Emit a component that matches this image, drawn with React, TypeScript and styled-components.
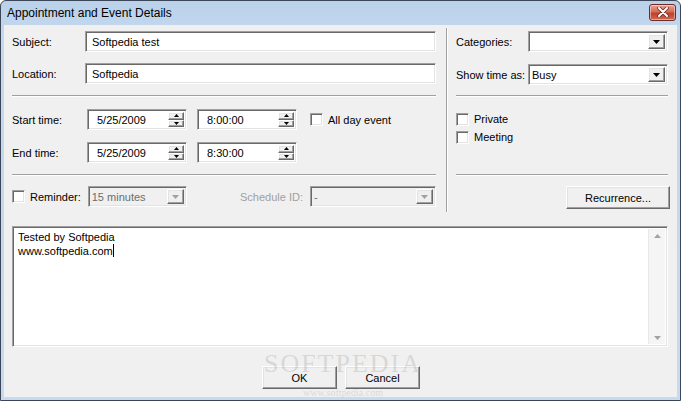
import React from 'react';
import styled, { createGlobalStyle, css } from 'styled-components';

const GlobalStyle = createGlobalStyle`
  html, body { margin: 0; padding: 0; background: #fff; }
  body {
    font-family: "Liberation Sans", Arial, sans-serif;
    font-size: 11px;
    color: #000;
  }
`;

const sunken = css`
  box-sizing: border-box;
  border: 1px solid;
  border-color: #a0a0a0 #fff #fff #a0a0a0;
  box-shadow: inset 1px 1px 0 #696969, inset -1px -1px 0 #e3e3e3;
`;

const raised = css`
  box-sizing: border-box;
  border: 1px solid;
  border-color: #fff #696969 #696969 #fff;
  box-shadow: inset -1px -1px 0 #a0a0a0, inset 1px 1px 0 #e3e3e3;
  background: #f0f0f0;
`;

const Window = styled.div`
  position: relative;
  width: 681px;
  height: 401px;
  box-sizing: border-box;
  display: flex;
  flex-direction: column;
  background: linear-gradient(#b9d1ea, #c4d8ee 30px, #c7daef);
  border: 1px solid #3c4657;
  border-radius: 6px 6px 0 0;
  padding: 0 3px 3px 3px;
  overflow: hidden;
`;

const TitleBar = styled.div`
  height: 24px;
  display: flex;
  align-items: center;
  justify-content: space-between;
  padding: 0 0 0 3px;
`;

const Title = styled.span`
  font-size: 12px;
  color: #000;
  margin-top: -1px;
`;

const CloseButton = styled.div`
  width: 27px;
  height: 17px;
  box-sizing: border-box;
  margin: -2px 1px 0 0;
  border: 1px solid #6b2b26;
  border-radius: 3px;
  background: linear-gradient(#e8a593, #d56b55 45%, #c0412a 55%, #cf6a4f);
  box-shadow: inset 0 0 0 1px rgba(255, 255, 255, 0.45);
  display: flex;
  align-items: center;
  justify-content: center;
`;

const Client = styled.div`
  flex: 1;
  background: #f0f0f0;
  padding: 0 7px 0 8px;
  display: flex;
  flex-direction: column;
`;

const TopArea = styled.div`
  height: 201px;
  display: flex;
`;

const Panel = styled.div<{ $width: number }>`
  width: ${(p) => p.$width}px;
  padding-top: 6px;
  display: flex;
  flex-direction: column;
`;

const VDivider = styled.div`
  width: 0;
  height: 184px;
  margin: 3px 8px 0 10px;
  border-left: 1px solid #a0a0a0;
  border-right: 1px solid #fff;
`;

const Row = styled.div<{ $top?: number; $height?: number; $end?: boolean }>`
  display: flex;
  align-items: center;
  justify-content: ${(p) => (p.$end ? 'flex-end' : 'flex-start')};
  height: ${(p) => p.$height ?? 21}px;
  margin-top: ${(p) => p.$top ?? 0}px;
`;

const Label = styled.span<{ $width?: number; $left?: number; $disabled?: boolean }>`
  width: ${(p) => (p.$width ? `${p.$width}px` : 'auto')};
  margin-left: ${(p) => p.$left ?? 0}px;
  flex-shrink: 0;
  color: ${(p) => (p.$disabled ? '#a0a0a0' : '#000')};
`;

const HSeparator = styled.div<{ $top: number; $right?: number }>`
  height: 0;
  margin-top: ${(p) => p.$top}px;
  margin-right: ${(p) => p.$right ?? 0}px;
  border-top: 1px solid #a0a0a0;
  border-bottom: 1px solid #fff;
`;

const TextBox = styled.div`
  ${sunken};
  height: 21px;
  flex: 1;
  background: #fff;
  display: flex;
  align-items: center;
  padding-left: 6px;
  white-space: nowrap;
`;

const SpinBox = styled.div<{ $left: number }>`
  ${sunken};
  width: 100px;
  height: 21px;
  margin-left: ${(p) => p.$left}px;
  background: #fff;
  display: flex;
  align-items: center;
  padding: 2px 2px 2px 9px;
`;

const SpinText = styled.span`
  flex: 1;
`;

const SpinButtons = styled.div`
  width: 16px;
  height: 100%;
  display: flex;
  flex-direction: column;
`;

const SpinHalf = styled.div`
  ${raised};
  flex: 1;
  display: flex;
  align-items: center;
  justify-content: center;
`;

const ComboBox = styled.div<{ $width: number; $left?: number; $disabled?: boolean }>`
  ${sunken};
  width: ${(p) => p.$width}px;
  height: 21px;
  margin-left: ${(p) => p.$left ?? 0}px;
  background: ${(p) => (p.$disabled ? '#f0f0f0' : '#fff')};
  color: ${(p) => (p.$disabled ? '#6d6d6d' : '#000')};
  display: flex;
  align-items: center;
  padding: 2px 2px 2px 3px;
`;

const ComboText = styled.span`
  flex: 1;
  white-space: nowrap;
`;

const DropButton = styled.div`
  ${raised};
  width: 17px;
  height: 100%;
  display: flex;
  align-items: center;
  justify-content: center;
`;

const CheckBox = styled.div<{ $left?: number }>`
  ${sunken};
  width: 13px;
  height: 13px;
  margin-left: ${(p) => p.$left ?? 0}px;
  background: #fff;
  flex-shrink: 0;
`;

const CheckLabel = styled.span`
  margin-left: 5px;
`;

const PushButton = styled.div<{ $width: number }>`
  ${raised};
  width: ${(p) => p.$width}px;
  height: 23px;
  display: flex;
  align-items: center;
  justify-content: center;
`;

const Notes = styled.div`
  ${sunken};
  height: 121px;
  margin-right: 2px;
  background: #fff;
  display: flex;
  padding: 2px;
`;

const NotesText = styled.div`
  flex: 1;
  padding: 2px 0 0 3px;
  line-height: 13px;
`;

const Caret = styled.span`
  display: inline-block;
  width: 1px;
  height: 13px;
  background: #000;
  vertical-align: -2px;
`;

const ScrollBar = styled.div`
  width: 16px;
  background: #f5f5f5;
  border-left: 1px solid #e8e8e8;
  display: flex;
  flex-direction: column;
  justify-content: space-between;
  align-items: center;
  padding: 5px 0 4px;
`;

const ButtonRow = styled.div`
  display: flex;
  justify-content: center;
  gap: 8px;
  margin-top: 19px;
`;

const Watermark = styled.div`
  position: absolute;
  left: 262px;
  top: 350px;
  width: 160px;
  text-align: center;
  pointer-events: none;
  color: rgba(170, 170, 170, 0.35);
  font-family: "Liberation Serif", serif;
`;

const WatermarkBig = styled.div`
  font-size: 26px;
  letter-spacing: 2px;
  line-height: 26px;
`;

const WatermarkSmall = styled.div`
  font-size: 10px;
  line-height: 12px;
  margin-top: 10px;
`;

const Arrow = ({ dir, color = '#000', w = 7 }: { dir: 'up' | 'down'; color?: string; w?: number }) => {
  const h = Math.ceil(w / 2);
  const points = dir === 'down' ? `0,0 ${w},0 ${w / 2},${h}` : `0,${h} ${w},${h} ${w / 2},0`;
  return (
    <svg width={w} height={h} viewBox={`0 0 ${w} ${h}`}>
      <polygon points={points} fill={color} />
    </svg>
  );
};

const Combo = ({ width, left, value, disabled }: { width: number; left?: number; value?: string; disabled?: boolean }) => (
  <ComboBox $width={width} $left={left} $disabled={disabled}>
    <ComboText>{value}</ComboText>
    <DropButton>
      <Arrow dir="down" color={disabled ? '#a0a0a0' : '#000'} />
    </DropButton>
  </ComboBox>
);

const Spin = ({ value, left }: { value: string; left: number }) => (
  <SpinBox $left={left}>
    <SpinText>{value}</SpinText>
    <SpinButtons>
      <SpinHalf>
        <Arrow dir="up" w={5} />
      </SpinHalf>
      <SpinHalf>
        <Arrow dir="down" w={5} />
      </SpinHalf>
    </SpinButtons>
  </SpinBox>
);

export default function App() {
  return (
    <>
      <GlobalStyle />
      <Window>
        <TitleBar>
          <Title>Appointment and Event Details</Title>
          <CloseButton>
            <svg width="12" height="10" viewBox="0 0 12 10">
              <path d="M2 1 L10 9 M10 1 L2 9" stroke="#6b2b26" strokeWidth="3.6" strokeLinecap="round" />
              <path d="M2 1 L10 9 M10 1 L2 9" stroke="#fff" strokeWidth="2" strokeLinecap="round" />
            </svg>
          </CloseButton>
        </TitleBar>
        <Client>
          <TopArea>
            <Panel $width={424}>
              <Row>
                <Label $width={73}>Subject:</Label>
                <TextBox>Softpedia test</TextBox>
              </Row>
              <Row $top={11}>
                <Label $width={73}>Location:</Label>
                <TextBox>Softpedia</TextBox>
              </Row>
              <HSeparator $top={11} />
              <Row $top={12}>
                <Label $width={73}>Start time:</Label>
                <Spin value="5/25/2009" left={2} />
                <Spin value="8:00:00" left={10} />
                <CheckBox $left={13} />
                <CheckLabel>All day event</CheckLabel>
              </Row>
              <Row $top={12}>
                <Label $width={73}>End time:</Label>
                <Spin value="5/25/2009" left={2} />
                <Spin value="8:30:00" left={10} />
              </Row>
              <HSeparator $top={11} />
              <Row $top={10}>
                <CheckBox />
                <CheckLabel>Reminder:</CheckLabel>
                <Combo width={100} left={7} value="15 minutes" disabled />
                <Label $disabled $left={53}>Schedule ID:</Label>
                <Combo width={127} left={7} value="-" disabled />
              </Row>
            </Panel>
            <VDivider />
            <Panel $width={214}>
              <Row>
                <Label $width={72}>Categories:</Label>
                <Combo width={140} />
              </Row>
              <Row $top={12}>
                <Label $width={72}>Show time as:</Label>
                <Combo width={140} value="Busy" />
              </Row>
              <HSeparator $top={10} $right={2} />
              <Row $top={14} $height={16}>
                <CheckBox />
                <CheckLabel>Private</CheckLabel>
              </Row>
              <Row $top={2} $height={16}>
                <CheckBox />
                <CheckLabel>Meeting</CheckLabel>
              </Row>
              <HSeparator $top={29} $right={2} />
              <Row $top={10} $height={23} $end>
                <PushButton $width={104}>Recurrence...</PushButton>
              </Row>
            </Panel>
          </TopArea>
          <Notes>
            <NotesText>
              Tested by Softpedia
              <br />
              www.softpedia.com
              <Caret />
            </NotesText>
            <ScrollBar>
              <Arrow dir="up" color="#a3a3a3" />
              <Arrow dir="down" color="#a3a3a3" />
            </ScrollBar>
          </Notes>
          <ButtonRow>
            <PushButton $width={75}>OK</PushButton>
            <PushButton $width={75}>Cancel</PushButton>
          </ButtonRow>
        </Client>
        <Watermark>
          <WatermarkBig>SOFTPEDIA</WatermarkBig>
          <WatermarkSmall>www.softpedia.com</WatermarkSmall>
        </Watermark>
      </Window>
    </>
  );
}
